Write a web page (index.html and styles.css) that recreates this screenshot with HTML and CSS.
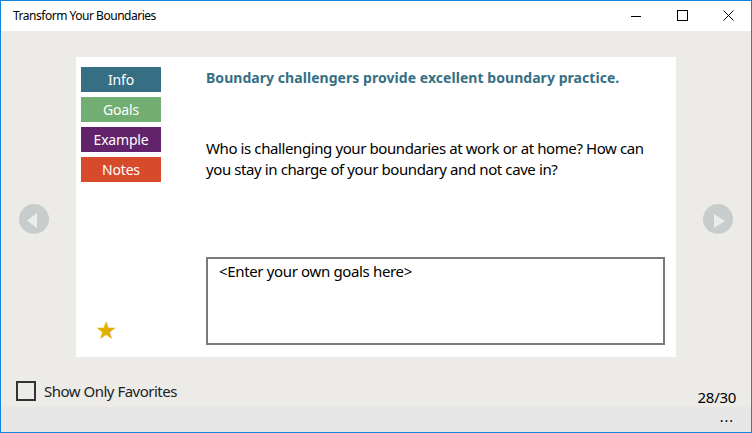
FILE: index.html
```html
<!DOCTYPE html>
<html>
<head>
<meta charset="utf-8">
<link rel="stylesheet" href="styles.css">
</head>
<body>
<div class="window">
  <div class="titlebar">
    <div class="title">Transform Your Boundaries</div>
    <div class="controls">
      <div class="ctl"><svg width="10" height="10" viewBox="0 0 10 10"><path d="M0 5.5H10" stroke="#000" stroke-width="1"/></svg></div>
      <div class="ctl"><svg width="11" height="11" viewBox="0 0 11 11"><rect x="0.5" y="0.5" width="10" height="10" fill="none" stroke="#000" stroke-width="1"/></svg></div>
      <div class="ctl"><svg width="11" height="11" viewBox="0 0 11 11"><path d="M0.5 0.5L10.5 10.5M10.5 0.5L0.5 10.5" stroke="#000" stroke-width="1"/></svg></div>
    </div>
  </div>
  <div class="main">
    <div class="stage">
      <div class="navcol">
        <div class="navbtn"><svg width="30" height="30" viewBox="0 0 30 30"><circle cx="15" cy="15" r="15" fill="#c6cdcc"/><path d="M8 16.5L18 9V24Z" fill="#e9edec"/></svg></div>
      </div>
      <div class="card">
        <div class="tabs">
          <div class="tab info">Info</div>
          <div class="tab goals">Goals</div>
          <div class="tab example">Example</div>
          <div class="tab notes">Notes</div>
          <div class="star">★</div>
        </div>
        <div class="content">
          <div class="heading">Boundary challengers provide excellent boundary practice.</div>
          <div class="body">Who is challenging your boundaries at work or at home? How can you stay in charge of your boundary and not cave in?</div>
          <div class="goalsbox">&lt;Enter your own goals here&gt;</div>
        </div>
      </div>
      <div class="navcol">
        <div class="navbtn"><svg width="30" height="30" viewBox="0 0 30 30"><circle cx="15" cy="15" r="15" fill="#c6cdcc"/><path d="M11 10V24L22 17Z" fill="#e9edec"/></svg></div>
      </div>
    </div>
    <div class="footer">
      <label class="fav"><span class="box"></span><span>Show Only Favorites</span></label>
      <div class="count">28/30</div>
    </div>
  </div>
  <div class="appbar"><span class="more">...</span></div>
</div>
</body>
</html>
```
FILE: styles.css
```css
* { box-sizing: border-box; }
html, body { margin: 0; padding: 0; }
body {
  width: 752px;
  height: 433px;
  overflow: hidden;
  font-family: "Noto Sans", "Open Sans", sans-serif;
  color: #000;
}
.window {
  width: 752px;
  height: 433px;
  border: 1px solid #1883d7;
  display: flex;
  flex-direction: column;
  background: #ecebe8;
}
.titlebar {
  height: 31px;
  background: #fff;
  display: flex;
  align-items: stretch;
  justify-content: space-between;
}
.title {
  font-size: 12px;
  padding-left: 12px;
  line-height: 30px;
  letter-spacing: -0.48px;
}
.controls { display: flex; }
.ctl {
  width: 46px;
  display: flex;
  align-items: center;
  justify-content: center;
  padding-bottom: 1px;
}
.main {
  flex: 1;
  display: flex;
  flex-direction: column;
  padding-top: 26px;
}
.stage {
  display: grid;
  grid-template-columns: 75px 600px 75px;
}
.navcol {
  display: flex;
  padding-top: 147px;
}
.navcol:first-child { padding-left: 18px; }
.navcol:last-child { padding-left: 27px; }
.navbtn { width: 30px; height: 30px; }
.card {
  background: #fff;
  height: 300px;
  display: flex;
  padding: 10px 11px 12px 5px;
}
.tabs {
  width: 80px;
  display: flex;
  flex-direction: column;
  gap: 5px;
}
.tab {
  height: 25px;
  color: #fff;
  font-size: 14px;
  text-align: center;
  line-height: 25px;
  letter-spacing: -0.2px;
}
.info { background: #366f84; }
.goals { background: #72ad72; }
.example { background: #63236b; }
.notes { background: #d84a2c; }
.star {
  margin-top: auto;
  margin-left: 14px;
  color: #e0b000;
  font-family: "DejaVu Sans", sans-serif;
  font-size: 25px;
  line-height: 26px;
  margin-bottom: 1px;
}
.content {
  flex: 1;
  margin-left: 45px;
  display: flex;
  flex-direction: column;
}
.heading {
  color: #366f84;
  font-weight: bold;
  font-size: 14px;
  line-height: 21px;
  letter-spacing: 0.05px;
}
.body {
  margin-top: 50px;
  font-size: 15px;
  line-height: 21px;
  letter-spacing: -0.4px;
}
.goalsbox {
  margin-top: auto;
  height: 88px;
  border: 2px solid #7a7a7a;
  padding: 2px 11px;
  font-size: 15px;
  line-height: 21px;
  letter-spacing: -0.35px;
}
.footer {
  display: flex;
  justify-content: space-between;
  align-items: flex-start;
  padding: 24px 15px 0 15px;
}
.fav {
  display: flex;
  align-items: center;
  gap: 8px;
  font-size: 15px;
  letter-spacing: -0.5px;
  color: #222;
}
.box {
  width: 20px;
  height: 20px;
  border: 2px solid #333;
}
.count {
  font-size: 15px;
  padding-top: 6px;
  letter-spacing: -0.3px;
  line-height: 20px;
}
.appbar {
  height: 27px;
  background: #e6e6e6;
  display: flex;
  justify-content: flex-end;
  padding-right: 17px;
}
.more {
  font-size: 14px;
  line-height: 20px;
  letter-spacing: 1px;
}
```
